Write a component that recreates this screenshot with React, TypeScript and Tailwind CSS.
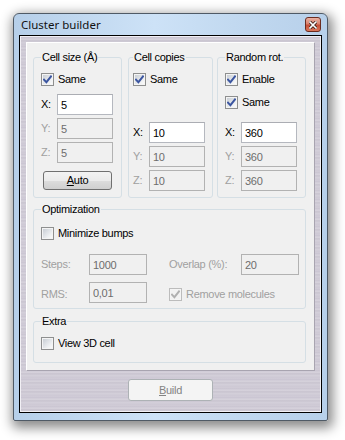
import React from 'react';

type CheckProps = { label: string; checked?: boolean; disabled?: boolean; className?: string };

function CheckBox({ label, checked = false, disabled = false, className = '' }: CheckProps) {
  return (
    <div className={`flex h-[13px] items-center gap-[4px] leading-[13px] ${className}`}>
      <span
        className={`flex h-[13px] w-[13px] shrink-0 items-center justify-center border p-[1px] ${
          disabled ? 'border-[#bcbcbc] bg-[#f4f4f4]' : 'border-[#8e8f8f] bg-[#f4f4f4]'
        }`}
      >
        <span
          className={`flex h-full w-full items-center justify-center ${
            disabled
              ? 'bg-[#f2f2f2]'
              : 'bg-[linear-gradient(135deg,#c9ced5,#eef0f2_70%,#fafafa)]'
          }`}
        >
          {checked && (
            <svg width="9" height="9" viewBox="0 0 9 9">
              <path
                d="M1 4.6 L3.4 7.2 L8 1.4"
                fill="none"
                stroke={disabled ? '#b0b0b0' : '#3b55a0'}
                strokeWidth="1.9"
                strokeLinecap="square"
              />
            </svg>
          )}
        </span>
      </span>
      <span className={disabled ? 'text-[#a0a0a0]' : 'text-black'}>{label}</span>
    </div>
  );
}

function Edit({ value, disabled = false, width = 'w-[56px]' }: { value: string; disabled?: boolean; width?: string }) {
  return (
    <input
      readOnly
      value={value}
      className={`h-[21px] ${width} border pl-[3px] leading-[19px] outline-none ${
        disabled
          ? 'border-[#b2b2b2] bg-[#f0f0f0] text-[#6d6d6d]'
          : 'border-[#b5b8bf] border-t-[#abadb3] bg-white text-black'
      }`}
    />
  );
}

function AxisRow({ axis, value, disabled, className = '' }: { axis: string; value: string; disabled?: boolean; className?: string }) {
  return (
    <div className={`flex items-center ${className}`}>
      <span className={`w-[16px] ${disabled ? 'text-[#a0a0a0]' : 'text-black'}`}>{axis}:</span>
      <Edit value={value} disabled={disabled} />
    </div>
  );
}

function Group({ title, className, children }: { title: string; className: string; children: React.ReactNode }) {
  return (
    <fieldset className={`rounded-[3px] border border-[#d5dfe5] ${className}`}>
      <legend className="px-[1px] font-normal leading-[13px] text-black">{title}</legend>
      {children}
    </fieldset>
  );
}

export default function App() {
  return (
    <div className="h-[440px] w-[345px] bg-white pl-[13px] pt-[13px] font-['Liberation_Sans',Arial,sans-serif] text-[11px] tracking-[-0.3px] text-black">
      <div className="flex h-[408px] w-[315px] flex-col rounded-t-[6px] rounded-b-[2px] border border-[#4f5a66] bg-[linear-gradient(90deg,#b6cfe9,#cde2f7_45%,#c2d9f0_70%,#b7d0ea)] px-[5px] pb-[7px] shadow-[2px_4px_12px_3px_rgba(0,0,0,0.45)]">
        <div className="flex h-[21px] shrink-0 items-center justify-between pl-[2px] pr-[1px]">
          <span className="font-['Noto_Sans',sans-serif] text-[11.5px] tracking-normal text-[#111]">Cluster builder</span>
          <span className="flex h-[15px] w-[16px] items-center justify-center rounded-[3px] border border-[#6b2c20] bg-[linear-gradient(180deg,#eab1a3,#d9816d_45%,#c64d35_55%,#d9775c)]">
            <svg width="8" height="8" viewBox="0 0 8 8">
              <path d="M1 1 L7 7 M7 1 L1 7" stroke="#3a1c16" strokeWidth="3.2" strokeLinecap="square" />
              <path d="M1 1 L7 7 M7 1 L1 7" stroke="#ffffff" strokeWidth="1.6" strokeLinecap="square" />
            </svg>
          </span>
        </div>

        <div className="flex flex-1 flex-col border border-black bg-[repeating-linear-gradient(180deg,#d2cdd8_0px,#c9c4d1_2px,#dad6df_3px,#c6c1cd_5px,#d4d0da_6px,#cdc8d4_9px)] shadow-[inset_0_0_0_1px_#f2f0f5]">
          <div className="mx-[6px] mt-[6px] flex flex-col border border-white border-b-[#a8a4b0] border-r-[#a8a4b0] bg-[#f0f0f0] pb-[7px] pl-[6px] pr-[7px] pt-[8px]">
            <div className="flex">
              <Group title="Cell size (Å)" className="h-[147px] w-[89px] pl-[7px]">
                <CheckBox label="Same" checked className="mt-[9px]" />
                <AxisRow axis="X" value="5" className="mt-[8px]" />
                <AxisRow axis="Y" value="5" disabled className="mt-[3px]" />
                <AxisRow axis="Z" value="5" disabled className="mt-[3px]" />
                <button className="ml-[2px] mt-[8px] flex h-[19px] w-[69px] items-center justify-center rounded-[3px] border border-[#707070] bg-[linear-gradient(180deg,#f3f3f3,#ebebeb_50%,#dddddd_51%,#cfcfcf)] leading-[13px] text-black">
                  <span>
                    <u>A</u>uto
                  </span>
                </button>
              </Group>
              <Group title="Cell copies" className="ml-[6px] h-[147px] w-[85px] pl-[4px]">
                <CheckBox label="Same" checked className="mt-[9px]" />
                <AxisRow axis="X" value="10" className="mt-[36px]" />
                <AxisRow axis="Y" value="10" disabled className="mt-[3px]" />
                <AxisRow axis="Z" value="10" disabled className="mt-[3px]" />
              </Group>
              <Group title="Random rot." className="ml-[4px] h-[147px] w-[89px] pl-[7px]">
                <CheckBox label="Enable" checked className="mt-[9px]" />
                <CheckBox label="Same" checked className="mt-[10px]" />
                <AxisRow axis="X" value="360" className="mt-[13px]" />
                <AxisRow axis="Y" value="360" disabled className="mt-[3px]" />
                <AxisRow axis="Z" value="360" disabled className="mt-[3px]" />
              </Group>
            </div>

            <Group title="Optimization" className="mt-[5px] h-[106px] w-[273px] pl-[7px]">
              <CheckBox label="Minimize bumps" className="mt-[11px]" />
              <div className="mt-[14px] flex items-center">
                <span className="w-[48px] text-[#a0a0a0]">Steps:</span>
                <Edit value="1000" disabled width="w-[58px]" />
                <span className="ml-[22px] w-[72px] text-[#a0a0a0]">Overlap (%):</span>
                <Edit value="20" disabled width="w-[58px]" />
              </div>
              <div className="mt-[7px] flex items-start">
                <span className="mt-[4px] w-[48px] text-[#a0a0a0]">RMS:</span>
                <Edit value="0,01" disabled width="w-[58px]" />
                <CheckBox label="Remove molecules" checked disabled className="ml-[22px] mt-[6px]" />
              </div>
            </Group>

            <Group title="Extra" className="mt-[6px] h-[48px] w-[273px] pl-[7px]">
              <CheckBox label="View 3D cell" className="mt-[9px]" />
            </Group>
          </div>

          <div className="flex flex-1 items-start justify-center pt-[8px]">
            <button className="flex h-[22px] w-[85px] items-center justify-center rounded-[3px] border border-[#adb2b5] bg-[#f4f4f4] text-[11px] text-[#838383]">
              <span>
                <u>B</u>uild
              </span>
            </button>
          </div>
        </div>
      </div>
    </div>
  );
}
